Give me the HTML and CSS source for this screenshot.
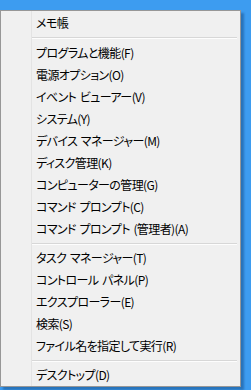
FILE: index.html
```html
<!DOCTYPE html>
<html lang="ja">
<head>
<meta charset="utf-8">
<link rel="stylesheet" href="styles.css">
</head>
<body>
<div class="menu">
  <div class="item">メモ帳</div>
  <div class="sep sep-first"></div>
  <div class="item">プログラムと機能(F)</div>
  <div class="item">電源オプション(O)</div>
  <div class="item">イベント ビューアー(V)</div>
  <div class="item">システム(Y)</div>
  <div class="item">デバイス マネージャー(M)</div>
  <div class="item">ディスク管理(K)</div>
  <div class="item">コンピューターの管理(G)</div>
  <div class="item">コマンド プロンプト(C)</div>
  <div class="item">コマンド プロンプト (管理者)(A)</div>
  <div class="sep"></div>
  <div class="item">タスク マネージャー(T)</div>
  <div class="item">コントロール パネル(P)</div>
  <div class="item">エクスプローラー(E)</div>
  <div class="item">検索(S)</div>
  <div class="item">ファイル名を指定して実行(R)</div>
  <div class="sep"></div>
  <div class="item">デスクトップ(D)</div>
</div>
</body>
</html>
```
FILE: styles.css
```css
html, body {
  margin: 0;
  padding: 0;
  width: 251px;
  height: 390px;
  overflow: hidden;
  background: #3d9cf0;
}
.menu {
  margin-top: 10px;
  width: 239px;
  border: 1px solid #979797;
  background-color: #f0f0f0;
  background-image: linear-gradient(#e3e3e3, #e3e3e3);
  background-size: 1px 100%;
  background-position: 30px 0;
  background-repeat: no-repeat;
  padding: 1px 0 0 0;
  box-shadow: 3px 3px 2px rgba(0, 40, 90, 0.35);
  font-family: "Noto Sans CJK JP", sans-serif;
  font-feature-settings: "palt";
  font-size: 12px;
  letter-spacing: -0.6px;
  word-spacing: 1.5px;
  color: #000;
}
.item {
  height: 22px;
  line-height: 22px;
  padding-left: 35px;
  white-space: nowrap;
}
.sep {
  height: 7px;
  display: flex;
  flex-direction: column;
  justify-content: center;
  margin-left: 31px;
  margin-right: 3px;
}
.sep::before {
  content: "";
  height: 1px;
  background: #d7d7d7;
}
.sep::after {
  content: "";
  height: 1px;
  background: #fdfdfd;
}
.sep-first {
  height: 8px;
}
```
